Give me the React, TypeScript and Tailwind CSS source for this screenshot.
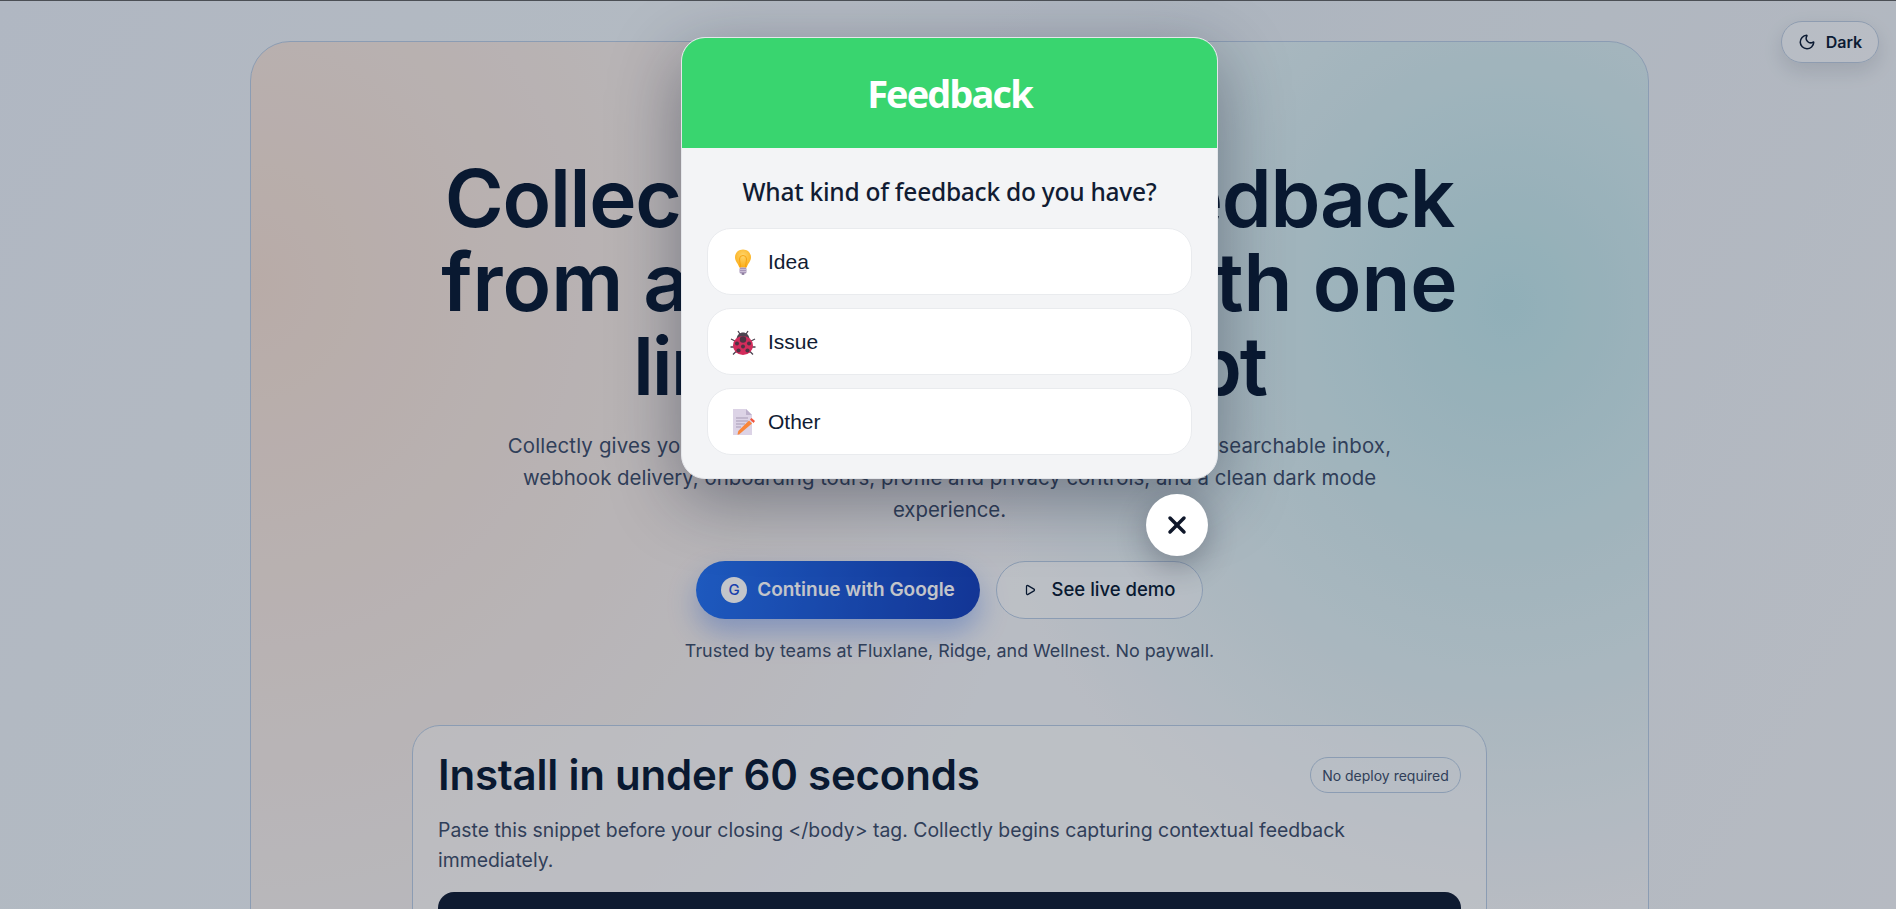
import { Moon, Play, X } from 'lucide-react'

const BODY = '"Inter", "Liberation Sans", sans-serif'

function BulbIcon() {
  return (
    <svg width="28" height="28" viewBox="0 0 28 28">
      <defs>
        <radialGradient id="bulb" cx="50%" cy="35%" r="60%">
          <stop offset="0" stopColor="#ffd66b" />
          <stop offset="1" stopColor="#fbb01f" />
        </radialGradient>
      </defs>
      <path d="M14 1.5c-4.6 0-8 3.4-8 7.8 0 4.2 3.2 6.1 4.2 10.2h7.6c1-4.1 4.2-6 4.2-10.2 0-4.4-3.4-7.800-8-7.800z" fill="url(#bulb)" />
      <path d="M11.5 19.5 10.500 11a3.500 3.500 0 1 1 7 0l-1 8.500" fill="none" stroke="#f59e0b" strokeWidth="0.9" />
      <rect x="10.500" y="19.500" width="7" height="6" rx="1.500" fill="#a795b8" />
      <path d="M10.500 21.500h7M10.500 23.500h7" stroke="#d8cfe0" strokeWidth="0.7" />
      <rect x="12.500" y="25.300" width="3" height="1.500" rx="0.700" fill="#75648a" />
    </svg>
  )
}

function BugIcon() {
  return (
    <svg width="28" height="28" viewBox="0 0 28 28">
      <path d="M9 3l2.500 4M19 3l-2.500 4M2 11l5 2.500M26 11l-5 2.500M1.500 19h5M26.500 19h-5M4 26.500l4-4M24 26.500l-4-4" stroke="#4b4350" strokeWidth="1.300" fill="none" />
      <path d="M7.500 11C8 6.500 11 4.500 14 4.500s6 2 6.500 6.500z" fill="#4d4450" />
      <ellipse cx="14" cy="17.500" rx="10" ry="9.500" fill="#d32c5c" />
      <circle cx="14" cy="11.500" r="3.200" fill="#4d3444" />
      <circle cx="14" cy="18.500" r="2" fill="#4d3444" />
      <circle cx="8" cy="15.500" r="2" fill="#4d3444" />
      <circle cx="20" cy="15.500" r="2" fill="#4d3444" />
      <circle cx="9.500" cy="22.500" r="2.100" fill="#4d3444" />
      <circle cx="18.500" cy="22.500" r="2.100" fill="#4d3444" />
    </svg>
  )
}

function MemoIcon() {
  return (
    <svg width="28" height="28" viewBox="0 0 28 28">
      <path d="M4 1h13l6 6v20H4z" fill="#dcd3e6" />
      <path d="M17 1l6 6h-6z" fill="#bdb1cc" />
      <path d="M7 10h12M7 13h12M7 16h9M7 19h5" stroke="#a79bb5" strokeWidth="1" />
      <path d="M10 26.500l-1.500 0 .800-3.500L20 12.500l3 3z" fill="#f9863a" />
      <path d="M21 11.500l1.500-1.500 3.500 3-1.500 2z" fill="#f3553e" />
    </svg>
  )
}

const OPTIONS = [
  { label: 'Idea', icon: BulbIcon },
  { label: 'Issue', icon: BugIcon },
  { label: 'Other', icon: MemoIcon },
]

export default function App() {
  return (
    <div
      className="relative h-[909px] overflow-hidden border-t border-[#4b4f55] bg-[#e9eff5] bg-[linear-gradient(120deg,#e6edf4,#ebf1f6_35%,#e2eaf1_50%,#eef1f4)] pt-10"
      style={{ fontFamily: BODY }}
    >
      <button className="absolute top-5 right-[17px] z-0 flex h-[42px] w-[98px] items-center justify-center gap-2.5 rounded-full border border-[#b9c9dc] bg-white/40 text-[16px] font-semibold text-[#0b1c36] shadow-[0_8px_20px_rgba(15,23,42,0.12)]">
        <Moon className="h-[18px] w-[18px]" />
        Dark
      </button>

      <main className="ml-[250px] h-[1200px] w-[1399px] rounded-[40px] border border-[#b5c9e0] bg-[#f1f3f6] bg-[radial-gradient(ellipse_820px_900px_at_0%_20%,#f0ddd1,transparent),radial-gradient(ellipse_560px_620px_at_90%_22%,#bce2e7,transparent)] px-[161px] pt-[114px]">
        <h1 className="text-center text-[80px] leading-[84px] font-semibold text-[#071a33]">
          <span className="block tracking-[-0.016em]">Collect customer feedback</span>
          <span className="block tracking-[0em]">from any website with one</span>
          <span className="block tracking-[-0.027em]">line of JavaScript</span>
        </h1>
        <p className="mt-[22px] text-center text-[20.400px] leading-8 text-[#3b4c69]">
          <span className="tracking-[0.008em]">Collectly gives you a lightweight embeddable widget, instant AI triage, a searchable inbox,</span>
          <br />
          webhook delivery, onboarding tours, profile and privacy controls, and a clean dark mode
          <br />
          experience.
        </p>

        <div className="mt-[35px] flex justify-center gap-4">
          <button className="flex h-[58px] w-[284px] items-center justify-center gap-2.5 rounded-full bg-[linear-gradient(100deg,#2370f0,#143fb8)] text-[19px] font-semibold text-white shadow-[0_14px_28px_rgba(37,99,235,0.35)]">
            <span className="flex h-[26px] w-[26px] items-center justify-center rounded-full bg-white text-[15px] font-medium text-[#1d4ed8]">
              G
            </span>
            Continue with Google
          </button>
          <button className="flex h-[58px] w-[207px] items-center justify-center gap-4 rounded-full border border-[#b5c9e0] bg-white/40 text-[18.500px] font-medium text-[#071a33]">
            <Play className="h-3 w-3" strokeWidth={2.5} />
            See live demo
          </button>
        </div>
        <p className="mt-[18px] text-center text-[17.900px] leading-7 text-[#3b4c69]">
          Trusted by teams at Fluxlane, Ridge, and Wellnest. No paywall.
        </p>

        <section className="mt-[60px] rounded-[28px] border border-[#b5c9e0] bg-white/40 px-[25px] pt-[21px]">
          <div className="flex items-center justify-between">
            <h2 className="text-[42px] leading-[56px] font-semibold tracking-[-0.005em] text-[#071a33]">
              Install in under 60 seconds
            </h2>
            <span className="flex h-[36px] w-[151px] items-center justify-center rounded-full border border-[#b5c9e0] text-[14px] text-[#3b4c69]">
              No deploy required
            </span>
          </div>
          <p className="mt-3 text-[19.400px] leading-[30px] text-[#3b4c69]">
            Paste this snippet before your closing &lt;/body&gt; tag. Collectly begins capturing contextual feedback
            <br />
            immediately.
          </p>
          <div className="mt-[17px] h-[200px] rounded-2xl bg-[#0f1c33]" />
        </section>
      </main>

      {/* feedback widget open on top of the dimmed page */}
      <div className="absolute inset-0 bg-[#0f172a]/25">
        <div className="absolute top-9 left-[681px] w-[537px] overflow-hidden rounded-[24px] border border-[#e5e7eb] bg-[#f3f4f6] shadow-[0_20px_70px_rgba(15,23,42,0.4)]">
          <div className="flex h-[110px] items-center justify-center bg-[#39d56f]">
            <span className="text-[38px] font-bold tracking-[-0.05em] text-white" style={{ fontFamily: '"Open Sans", sans-serif' }}>
              Feedback
            </span>
          </div>
          <div className="flex flex-col gap-[13px] px-[25px] pt-[22px] pb-[23px]">
            <div className="mb-[1px] text-center text-[24.500px] leading-[44px] font-medium tracking-[-0.01em] text-[#111c33]" style={{ fontFamily: '"Noto Sans", sans-serif' }}>
              What kind of feedback do you have?
            </div>
            {OPTIONS.map(({ label, icon: Icon }) => (
              <button key={label} className="flex h-[67px] items-center gap-[11px] rounded-[24px] border border-[#e9ebee] bg-white pl-[21px] text-[21px] text-[#111c33]" style={{ fontFamily: '"Liberation Sans", sans-serif' }}>
                <Icon />
                {label}
              </button>
            ))}
          </div>
        </div>

        <button className="absolute top-[493px] left-[1146px] flex h-[62px] w-[62px] items-center justify-center rounded-full bg-white text-[#0f172a] shadow-[0_10px_30px_rgba(15,23,42,0.3)]">
          <X className="h-7 w-7" strokeWidth={3} />
        </button>
      </div>
    </div>
  )
}
